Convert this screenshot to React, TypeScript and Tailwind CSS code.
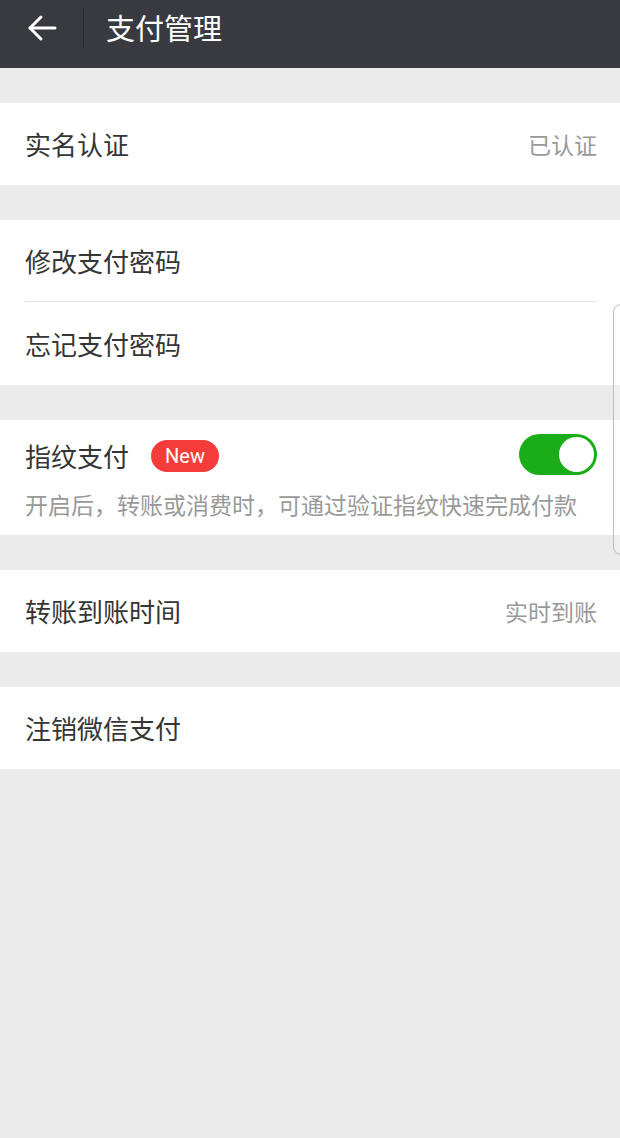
import React from 'react'

const font = { fontFamily: '"Noto Sans CJK SC", "Noto Sans", sans-serif' }

function Row({ label, value, divider }: { label: string; value?: string; divider?: boolean }) {
  return (
    <div className="relative h-[82px] flex items-center justify-between pl-[25px] pr-[23px]">
      <span className="text-[26px] text-[#353535] leading-none">{label}</span>
      {value && <span className="text-[23px] text-[#999999] leading-none">{value}</span>}
      {divider && <div className="absolute left-[25px] right-[23px] bottom-0 h-px bg-[#e5e5e5]" />}
    </div>
  )
}

export default function App() {
  return (
    <div className="relative w-[620px] min-h-[1138px] bg-[#ebebeb]" style={font}>
      {/* Header */}
      <div className="h-[68px] bg-[#393a3f]">
        <div className="h-[55px] flex items-center">
          <div className="w-[83px] flex items-center pl-[27px]">
            <svg width="30" height="28" viewBox="0 0 30 28" fill="none" stroke="white" strokeWidth="3" strokeLinecap="round" strokeLinejoin="round">
              <path d="M28 14H3" />
              <path d="M14 3L3 14L14 25" />
            </svg>
          </div>
          <div className="w-px h-[39px] bg-[#2c2d31]" />
          <span className="ml-[22px] text-[29px] text-white leading-none">支付管理</span>
        </div>
      </div>

      <div className="pt-[35px] flex flex-col gap-[35px]">
        <div className="bg-white">
          <Row label="实名认证" value="已认证" />
        </div>

        <div className="bg-white">
          <Row label="修改支付密码" divider />
          <div className="h-px" />
          <Row label="忘记支付密码" />
        </div>

        <div className="bg-white h-[115px] pl-[25px] pr-[23px] flex flex-col">
          <div className="flex items-center justify-between pt-[14px]">
            <div className="flex items-center">
              <span className="text-[26px] text-[#353535] leading-none pt-[2px]">指纹支付</span>
              <span
                className="ml-[22px] mt-[2px] h-[32px] w-[68px] rounded-full bg-[#f43d3a] text-white text-[20px] flex items-center justify-center leading-none"
                style={{ fontFamily: 'Roboto, "Noto Sans", sans-serif' }}
              >
                New
              </span>
            </div>
            <div className="w-[78px] h-[41px] rounded-full bg-[#1aad19] p-[3px] flex justify-end">
              <div className="w-[35px] h-[35px] rounded-full bg-white" />
            </div>
          </div>
          <span className="mt-[18px] text-[23px] text-[#999999] leading-none">
            开启后，转账或消费时，可通过验证指纹快速完成付款
          </span>
        </div>

        <div className="bg-white">
          <Row label="转账到账时间" value="实时到账" />
        </div>

        <div className="bg-white">
          <Row label="注销微信支付" />
        </div>
      </div>

      {/* edge handle overlay */}
      <div className="absolute left-[613px] top-[304px] w-[20px] h-[251px] rounded-[8px] border border-[#bdbdbd] bg-white/20" />
    </div>
  )
}
